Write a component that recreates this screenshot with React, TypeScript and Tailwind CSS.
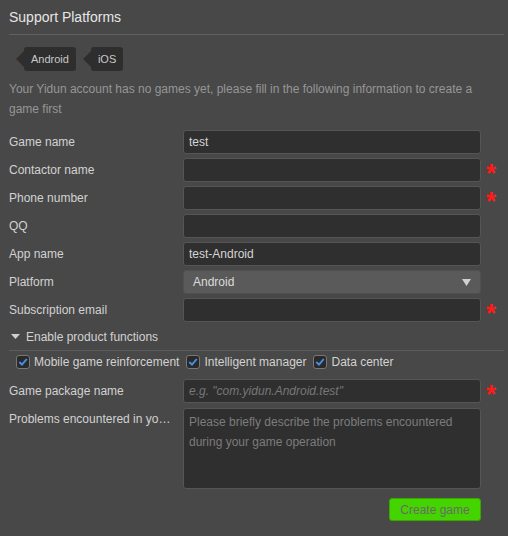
import React from "react";

const font = { fontFamily: '"Liberation Sans", Arial, sans-serif' };

function Star() {
  return (
    <span className="flex h-[24px] items-center pl-[5px] text-[26px] font-bold leading-none text-[#ff1a1a]">
      <span className="translate-y-[3px]">*</span>
    </span>
  );
}

function Field({ value, placeholder }: { value?: string; placeholder?: string }) {
  return (
    <div className="flex h-[24px] items-center rounded-[3px] border border-[#555555] bg-[#2f2f2f] px-[5px] text-[12px] text-[#d4d4d4]">
      {value ? value : <span className="italic text-[#777777]">{placeholder}</span>}
    </div>
  );
}

function Tag({ label }: { label: string }) {
  return (
    <div className="flex items-center">
      <svg width="8" height="24" viewBox="0 0 8 24" className="block">
        <path d="M8 4 L0 12 L8 20 Z" fill="#2e2e2e" />
      </svg>
      <div className="flex h-[24px] items-center rounded-[3px] bg-[#2e2e2e] px-[7px] text-[11px] text-[#c8c8c8]">
        {label}
      </div>
    </div>
  );
}

function Check({ label }: { label: string }) {
  return (
    <label className="flex items-center gap-[4px]">
      <span className="flex h-[14px] w-[14px] items-center justify-center rounded-[3px] border border-[#777777] bg-[#2a2a2a]">
        <svg width="10" height="10" viewBox="0 0 10 10">
          <path d="M1.3 5 L4 7.6 L8.8 2" fill="none" stroke="#4a8fe6" strokeWidth="1.9" />
        </svg>
      </span>
      <span>{label}</span>
    </label>
  );
}

const rows = [
  { label: "Game name", value: "test" },
  { label: "Contactor name", required: true },
  { label: "Phone number", required: true },
  { label: "QQ" },
  { label: "App name", value: "test-Android" },
];

export default function App() {
  return (
    <div style={font} className="h-[536px] w-[508px] overflow-hidden bg-[#484848] text-[12px] text-[#d2d2d2]">
      <div className="ml-[9px] mr-[4px] border-b border-[#606060] pt-[8px] pb-[8px] text-[14px] leading-[18px] text-[#e6e6e6]">
        Support Platforms
      </div>

      <div className="mt-[12px] flex gap-[7px] pl-[16px]">
        <Tag label="Android" />
        <Tag label="iOS" />
      </div>

      <p className="mt-[8px] px-[9px] leading-[20px] text-[#969696]">
        Your Yidun account has no games yet, please fill in the following information to create a game first
      </p>

      <div className="mt-[11px] grid grid-cols-[174px_298px_1fr] gap-y-[4px] pl-[9px]">
        {rows.map((r) => (
          <React.Fragment key={r.label}>
            <div className="flex h-[24px] items-center">{r.label}</div>
            <Field value={r.value} />
            {r.required ? <Star /> : <div />}
          </React.Fragment>
        ))}

        <div className="flex h-[24px] items-center">Platform</div>
        <div className="flex h-[24px] items-center justify-between rounded-[3px] border border-[#505050] bg-[#5a5a5a] pl-[9px] pr-[9px] text-[#dcdcdc]">
          <span>Android</span>
          <svg width="9" height="7" viewBox="0 0 9 7">
            <path d="M0 0 H9 L4.5 7 Z" fill="#d0d0d0" />
          </svg>
        </div>
        <div />

        <div className="flex h-[24px] items-center">Subscription email</div>
        <Field />
        <Star />
      </div>

      <div className="mt-[2px] ml-[9px] mr-[4px] flex h-[27px] items-center gap-[6px] border-b border-[#5c5c5c]">
        <svg width="9" height="6" viewBox="0 0 9 6" className="ml-[2px]">
          <path d="M0 0 H9 L4.5 5 Z" fill="#d0d0d0" />
        </svg>
        <span>Enable product functions</span>
      </div>

      <div className="mt-[3px] flex h-[16px] items-center gap-[7px] pl-[16px]">
        <Check label="Mobile game reinforcement" />
        <Check label="Intelligent manager" />
        <Check label="Data center" />
      </div>

      <div className="mt-[9px] grid grid-cols-[174px_298px_1fr] gap-y-[5px] pl-[9px]">
        <div className="flex h-[24px] items-center">Game package name</div>
        <Field placeholder={'e.g. "com.yidun.Android.test"'} />
        <Star />

        <div className="truncate pr-[6px] pt-[4px] leading-[14px]">Problems encountered in your game operation</div>
        <div className="h-[81px] rounded-[3px] border border-[#555555] bg-[#2f2f2f] px-[5px] pt-[3px] leading-[20px] text-[#7c7c7c]">
          Please briefly describe the problems encountered during your game operation
        </div>
        <div />
      </div>

      <div className="mt-[9px] flex w-[481px] justify-end">
        <button className="h-[23px] w-[92px] rounded-[3px] border border-[#3aa800] bg-[#44d400] text-[12px] text-[#6a6a6a]">
          Create game
        </button>
      </div>
    </div>
  );
}
